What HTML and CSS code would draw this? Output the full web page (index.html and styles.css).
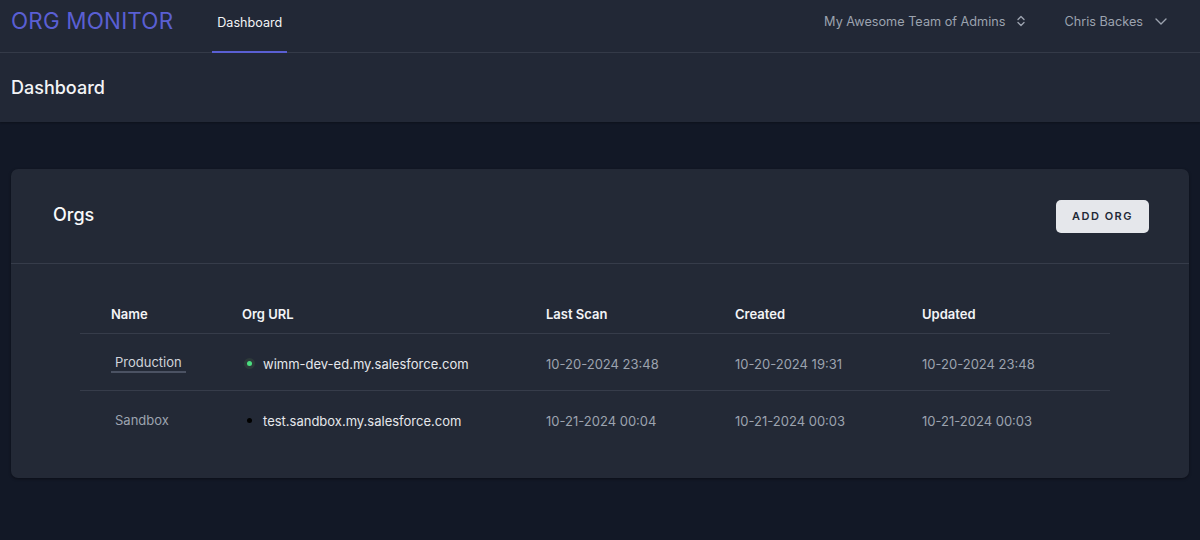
FILE: index.html
```html
<!DOCTYPE html>
<html lang="en">
<head>
    <meta charset="UTF-8">
    <meta name="viewport" content="width=device-width, initial-scale=1.0">
    <title>Org Monitor</title>
    <link rel="stylesheet" href="styles.css">
</head>
<body>

    <nav class="topnav">
        <div class="nav-left">
            <div class="logo">ORG MONITOR</div>
            <a class="nav-link active" href="#">Dashboard</a>
        </div>
        <div class="nav-right">
            <div class="menu">
                <span>My Awesome Team of Admins</span>
                <svg width="10" height="12" viewBox="0 0 10 12" fill="none" stroke="currentColor" stroke-width="1.4" stroke-linecap="round" stroke-linejoin="round">
                    <path d="M2 4.5 5 1.5 8 4.5"/>
                    <path d="M2 7.5 5 10.5 8 7.5"/>
                </svg>
            </div>
            <div class="menu">
                <span>Chris Backes</span>
                <svg width="14" height="10" viewBox="0 0 14 10" fill="none" stroke="currentColor" stroke-width="1.4" stroke-linecap="round" stroke-linejoin="round">
                    <path d="M2 3 7 8 12 3"/>
                </svg>
            </div>
        </div>
    </nav>

    <header class="page-header">
        <h1>Dashboard</h1>
    </header>

    <main class="content">
        <section class="card">
            <div class="card-header">
                <h2>Orgs</h2>
                <button class="btn">ADD ORG</button>
            </div>
            <div class="card-body">
                <table class="orgs">
                    <thead>
                        <tr>
                            <th class="col-name">Name</th>
                            <th class="col-url">Org URL</th>
                            <th class="col-scan">Last Scan</th>
                            <th class="col-created">Created</th>
                            <th>Updated</th>
                        </tr>
                    </thead>
                    <tbody>
                        <tr>
                            <td><span class="org-name selected">Production</span></td>
                            <td class="url"><span class="dot ok"></span>wimm-dev-ed.my.salesforce.com</td>
                            <td class="date">10-20-2024 23:48</td>
                            <td class="date">10-20-2024 19:31</td>
                            <td class="date">10-20-2024 23:48</td>
                        </tr>
                        <tr>
                            <td><span class="org-name">Sandbox</span></td>
                            <td class="url"><span class="dot"></span>test.sandbox.my.salesforce.com</td>
                            <td class="date">10-21-2024 00:04</td>
                            <td class="date">10-21-2024 00:03</td>
                            <td class="date">10-21-2024 00:03</td>
                        </tr>
                    </tbody>
                </table>
            </div>
        </section>
    </main>

</body>
</html>
```

FILE: styles.css
```css
body {
    margin: 0;
    background: #121826;
    font-family: Inter, "Noto Sans", sans-serif;
    color: #e5e7eb;
}

.topnav {
    display: flex;
    justify-content: space-between;
    height: 52px;
    padding: 0 11px;
    background: #222836;
    border-bottom: 1px solid #363c4a;
}

.nav-left {
    display: flex;
    align-items: stretch;
}

.logo {
    font-size: 22.4px;
    color: #5a5fd3;
    letter-spacing: 0.2px;
    padding-top: 7px;
    margin-right: 39px;
}

.nav-link {
    display: flex;
    align-items: center;
    padding: 0 5px 7px;
    color: #f3f4f6;
    font-size: 12.6px;
    text-decoration: none;
    border-bottom: 2px solid transparent;
    margin-bottom: -1px;
}

.nav-link.active {
    border-bottom-color: #5a5fd3;
}

.nav-right {
    display: flex;
    align-items: center;
    gap: 38px;
    padding-right: 21px;
    padding-bottom: 10px;
}

.menu {
    display: flex;
    align-items: center;
    gap: 11px;
    font-size: 12.7px;
    color: #9ca3af;
}

.page-header {
    background: #222836;
    height: 69px;
    display: flex;
    align-items: center;
    padding: 0 11px;
    box-shadow: 0 1px 2px rgba(0, 0, 0, 0.3);
}

.page-header h1 {
    margin: 0;
    font-size: 18px;
    font-weight: 500;
    color: #f3f4f6;
}

.content {
    padding: 47px 11px;
}

.card {
    background: #232936;
    border-radius: 7px;
    box-shadow: 0 1px 3px rgba(0, 0, 0, 0.4);
    overflow: hidden;
}

.card-header {
    display: flex;
    justify-content: space-between;
    align-items: center;
    height: 94px;
    padding: 0 40px 0 42px;
    border-bottom: 1px solid #363c4a;
}

.card-header h2 {
    margin: 0 0 4px;
    font-size: 18px;
    font-weight: 500;
    color: #f9fafb;
}

.btn {
    width: 93px;
    height: 33px;
    background: #e5e7eb;
    color: #1f2937;
    border: none;
    border-radius: 5px;
    font-family: inherit;
    font-size: 11px;
    font-weight: 600;
    letter-spacing: 1.5px;
    cursor: pointer;
}

.card-body {
    padding: 35px 79px 31px 69px;
}

.orgs {
    width: 100%;
    border-collapse: collapse;
    font-size: 13px;
}

.orgs th {
    text-align: left;
    font-weight: 600;
    color: #f3f4f6;
    line-height: 16px;
    padding: 7px 0 11px 31px;
    border-bottom: 1px solid #363c4a;
}

.orgs td {
    height: 53px;
    padding: 3px 0 0 31px;
    vertical-align: middle;
}

.orgs tbody tr:first-child td {
    border-bottom: 1px solid #363c4a;
}

.col-name { width: 100px; }
.col-url { width: 273px; }
.col-scan { width: 158px; }
.col-created { width: 156px; }

.org-name {
    display: inline-block;
    padding: 0 4px 1px;
    color: #9ca3af;
}

.org-name.selected {
    color: #d1d5db;
    border-bottom: 2px solid #4b5263;
}

.url {
    color: #e5e7eb;
}

.dot {
    display: inline-block;
    width: 5px;
    height: 5px;
    border-radius: 50%;
    background: #000;
    margin: 0 11px 2px 5px;
    vertical-align: middle;
}

.dot.ok {
    background: #4ade80;
    box-shadow: 0 0 0 3px #2d3a3a;
}

.date {
    color: #9ca3af;
}
```
